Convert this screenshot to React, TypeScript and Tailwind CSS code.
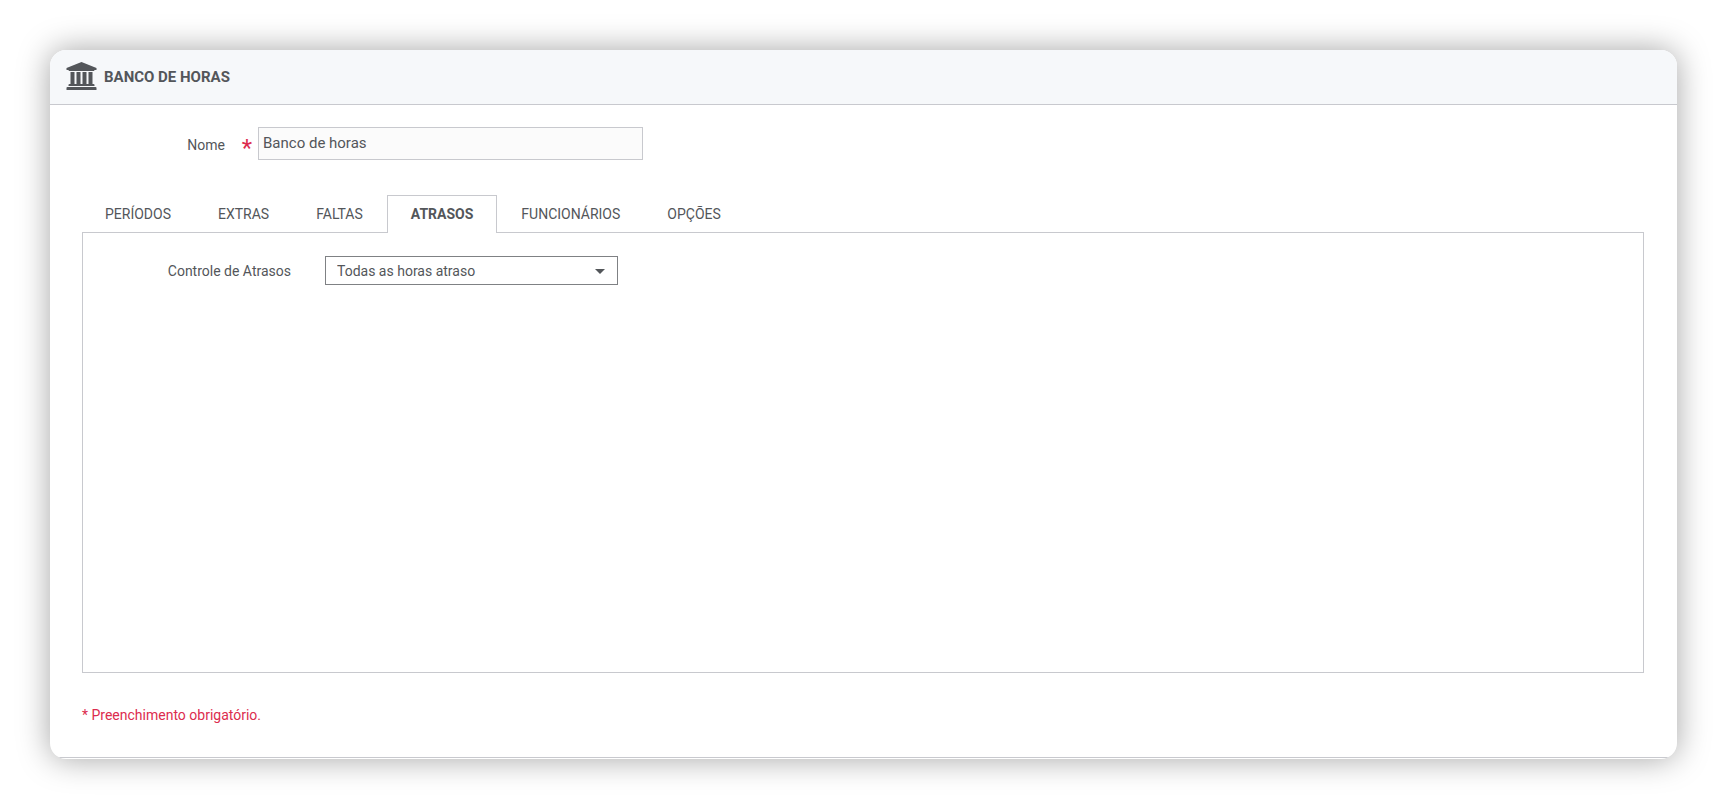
import * as React from "react";

const tabs = ["PERÍODOS", "EXTRAS", "FALTAS", "ATRASOS", "FUNCIONÁRIOS", "OPÇÕES"];

function BankIcon() {
  return (
    <svg viewBox="0 0 1920 1792" className="w-[31px] h-[28px]" fill="currentColor" aria-hidden="true">
      <path d="M960 0l960 384v128h-128q0 26-20.5 45t-48.5 19H197q-28 0-48.5-19T128 512H0V384zM256 640h256v768h128V640h256v768h128V640h256v768h128V640h256v768h59q28 0 48.5 19t20.5 45v64H128v-64q0-26 20.5-45t48.5-19h59V640zm1595 960q28 0 48.5 19t20.5 45v128H0v-128q0-26 20.5-45t48.5-19h1782z" />
    </svg>
  );
}

export default function App() {
  const [active, setActive] = React.useState("ATRASOS");

  return (
    <div className="bg-white pt-[50px] pb-[50px] pl-[50px] pr-[51px] font-['Roboto',sans-serif] text-sm text-[#53565a]">
      <main className="pb-px rounded-2xl overflow-hidden bg-white shadow-[0_0_32px_rgba(0,0,0,0.36)]">
        {/* Header */}
        <header className="h-[55px] px-4 pt-3 flex items-start gap-[7px] bg-[#f6f8fa] border-b border-[#c8c9ce]">
          <BankIcon />
          <h1 className="text-[15px] leading-[30px] font-bold">BANCO DE HORAS</h1>
        </header>

        <form className="pl-8 pr-[33px] pt-[22px] border-b border-[#c8c9ce]">
          {/* Name */}
          <div className="flex items-center">
            <label htmlFor="nome" className="w-[143px] pt-[2px] text-right">
              Nome
            </label>
            <span className="w-[33px] pr-[6px] pt-2 text-right text-2xl leading-6 text-[#dc2c4e]" aria-hidden="true">*</span>
            <input
              id="nome"
              type="text"
              required
              defaultValue="Banco de horas"
              className="w-[385px] h-[33px] px-1 pb-[2px] text-[15px] bg-[#fbfbfb] border border-[#c8c9ce] outline-none"
            />
          </div>

          {/* Tabs */}
          <div role="tablist" className="flex gap-px mt-[35px]">
            {tabs.map((tab) => (
              <button
                key={tab}
                type="button"
                role="tab"
                aria-selected={tab === active}
                onClick={() => setActive(tab)}
                className={
                  tab === active
                    ? "relative h-[38px] -mb-px px-[23px] pb-[2px] font-bold bg-white border border-b-0 border-[#c8c9ce]"
                    : "h-[37px] px-[23px]"
                }
              >
                {tab}
              </button>
            ))}
          </div>

          {/* Tab content */}
          <div role="tabpanel" className="min-h-[441px] pt-[23px] border border-[#c8c9ce]">
            <div className="flex items-center">
              <label htmlFor="controle" className="w-[208px] mr-[34px] text-right">
                Controle de Atrasos
              </label>
              <div className="relative w-[293px]">
                <select
                  id="controle"
                  className="w-full h-[29px] px-[11px] appearance-none bg-white border border-[#7f8184] outline-none"
                >
                  <option>Todas as horas atraso</option>
                </select>
                <svg viewBox="0 0 10 5" className="absolute right-[13px] top-[13px] w-[10px] h-[5px] pointer-events-none" fill="currentColor">
                  <path d="M0 0h10L5 5z" />
                </svg>
              </div>
            </div>
          </div>

          <p className="mt-8 pb-8 leading-5 text-[#dc2c4e]">* Preenchimento obrigatório.</p>
        </form>
      </main>
    </div>
  );
}
